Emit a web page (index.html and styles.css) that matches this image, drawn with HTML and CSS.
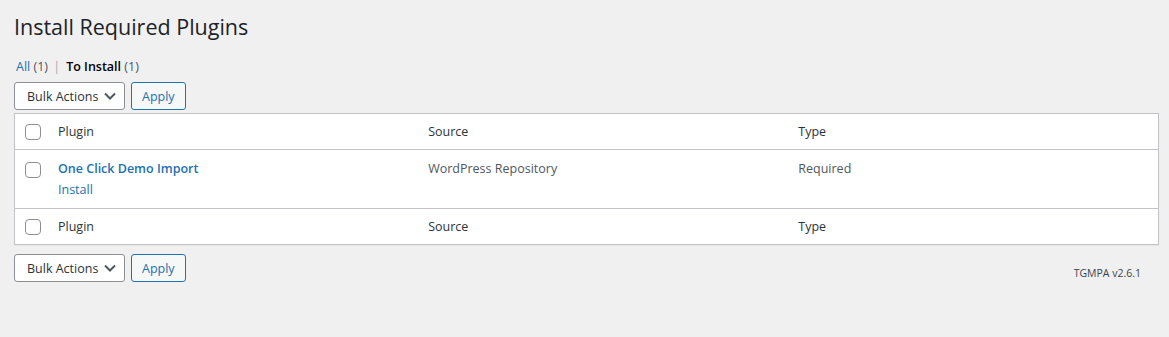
FILE: index.html
```
<!DOCTYPE html>
<html lang="en">
<head>
    <meta charset="UTF-8">
    <title>Install Required Plugins</title>
    <link rel="stylesheet" href="styles.css">
</head>
<body>
    <div class="wrap">
        <h1>Install Required Plugins</h1>
        <ul class="subsubsub">
            <li><a href="#">All <span class="count">(1)</span></a> <span class="sep">|</span></li>
            <li><a href="#" class="current">To Install <span class="count">(1)</span></a></li>
        </ul>
        <div class="tablenav top">
            <div class="select-wrap">
                <select>
                    <option>Bulk Actions</option>
                </select>
                <svg class="chevron" width="12" height="8" viewBox="0 0 12 8"><path d="M1 1.5l5 5 5-5" fill="none" stroke="#50575e" stroke-width="2"/></svg>
            </div>
            <button class="button">Apply</button>
        </div>
        <table class="widefat">
            <thead>
                <tr>
                    <td class="check-column"><span class="checkbox"></span></td>
                    <th>Plugin</th>
                    <th>Source</th>
                    <th>Type</th>
                </tr>
            </thead>
            <tbody>
                <tr>
                    <td class="check-column"><span class="checkbox"></span></td>
                    <td>
                        <a href="#" class="plugin-name">One Click Demo Import</a>
                        <div class="row-actions"><a href="#">Install</a></div>
                    </td>
                    <td>WordPress Repository</td>
                    <td>Required</td>
                </tr>
            </tbody>
            <tfoot>
                <tr>
                    <td class="check-column"><span class="checkbox"></span></td>
                    <th>Plugin</th>
                    <th>Source</th>
                    <th>Type</th>
                </tr>
            </tfoot>
        </table>
        <div class="tablenav bottom">
            <div class="select-wrap">
                <select>
                    <option>Bulk Actions</option>
                </select>
                <svg class="chevron" width="12" height="8" viewBox="0 0 12 8"><path d="M1 1.5l5 5 5-5" fill="none" stroke="#50575e" stroke-width="2"/></svg>
            </div>
            <button class="button">Apply</button>
            <p class="version">TGMPA v2.6.1</p>
        </div>
    </div>
</body>
</html>
```

FILE: styles.css
```
body {
    margin: 0;
    background-color: #f0f0f1;
    font-family: "Open Sans", "Noto Sans", sans-serif;
    font-size: 13px;
    color: #3c434a;
}
a {
    color: #2271b1;
    text-decoration: none;
}
.wrap {
    padding: 0 10px 0 14px;
}
h1 {
    margin: 12px 0 0;
    font-size: 21.5px;
    font-weight: 400;
    line-height: 30px;
    color: #1d2327;
}
.subsubsub {
    list-style: none;
    margin: 12px 0 0;
    padding: 0 0 0 2px;
    display: flex;
    gap: 4px;
    line-height: 26px;
    font-size: 12.5px;
}
.subsubsub .count {
    color: #50575e;
}
.subsubsub .sep {
    color: #a7aaad;
    margin: 0 2px;
}
.subsubsub .current {
    color: #000;
    font-weight: 600;
}
.subsubsub .current .count {
    font-weight: 400;
}
.tablenav {
    display: flex;
    align-items: center;
    gap: 6px;
    height: 28px;
}
.tablenav.top {
    margin: 2px 0 3px;
}
.tablenav.bottom {
    margin-top: 9px;
}
.select-wrap {
    position: relative;
}
select {
    appearance: none;
    -webkit-appearance: none;
    width: 111px;
    height: 28px;
    padding: 0 24px 0 12px;
    border: 1px solid #8c8f94;
    border-radius: 3px;
    background: #fff;
    font: inherit;
    font-size: 12.5px;
    color: #2c3338;
}
.chevron {
    position: absolute;
    right: 9px;
    top: 10px;
    pointer-events: none;
}
.button {
    height: 28px;
    padding: 0 10px;
    border: 1px solid #2271b1;
    border-radius: 3px;
    background: #f6f7f7;
    color: #2271b1;
    font: inherit;
    font-size: 12.5px;
}
.widefat {
    width: 100%;
    border-collapse: collapse;
    background: #fff;
    border: 1px solid #c3c4c7;
    box-shadow: 0 1px 1px rgba(0, 0, 0, 0.04);
    table-layout: fixed;
}
.widefat th,
.widefat td {
    text-align: left;
    font-weight: 400;
    font-size: 12.5px;
    line-height: 20px;
    padding: 0 10px;
    vertical-align: middle;
}
.widefat th {
    color: #2c3338;
}
.widefat td {
    color: #50575e;
}
.widefat thead tr {
    height: 36px;
    border-bottom: 1px solid #c3c4c7;
}
.widefat tbody tr {
    height: 59px;
}
.widefat tfoot tr {
    height: 36px;
    border-top: 1px solid #c3c4c7;
}
.widefat tbody td {
    vertical-align: top;
    padding-top: 9px;
}
.widefat .check-column {
    width: 13px;
    padding: 0 10px;
}
.widefat tbody .check-column {
    padding-top: 12px;
}
.checkbox {
    display: block;
    width: 14px;
    height: 14px;
    border: 1px solid #8c8f94;
    border-radius: 4px;
    background: #fff;
}
.plugin-name {
    font-weight: 600;
}
.row-actions {
    margin-top: 1px;
}
.version {
    margin: 0 18px 0 auto;
    padding-top: 10px;
    font-size: 10.5px;
    color: #3c434a;
}
```
